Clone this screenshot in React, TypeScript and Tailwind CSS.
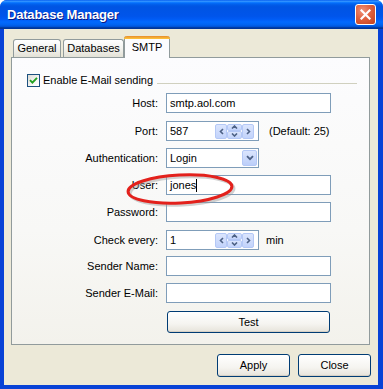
import React from "react";

function Spinner() {
  return (
    <div className="flex h-[15px] w-[39px] mr-[4px]">
      <div className="w-[12px] h-full rounded-[2px] border border-[#b4c8f6] bg-[linear-gradient(180deg,#dbe5fd_0%,#c2d3fb_100%)] flex items-center justify-center">
        <svg width="5" height="7" viewBox="0 0 5 7"><path d="M4 1 L1.5 3.5 L4 6" stroke="#4d6185" strokeWidth="1.6" fill="none" /></svg>
      </div>
      <div className="w-[15px] h-full flex flex-col">
        <div className="flex-1 rounded-[2px] border border-[#b4c8f6] bg-[linear-gradient(180deg,#dbe5fd_0%,#c2d3fb_100%)] flex items-center justify-center">
          <svg width="7" height="4" viewBox="0 0 7 4"><path d="M1 3.5 L3.5 1 L6 3.5" stroke="#4d6185" strokeWidth="1.6" fill="none" /></svg>
        </div>
        <div className="flex-1 rounded-[2px] border border-[#b4c8f6] bg-[linear-gradient(180deg,#dbe5fd_0%,#c2d3fb_100%)] flex items-center justify-center">
          <svg width="7" height="4" viewBox="0 0 7 4"><path d="M1 0.5 L3.5 3 L6 0.5" stroke="#4d6185" strokeWidth="1.6" fill="none" /></svg>
        </div>
      </div>
      <div className="w-[12px] h-full rounded-[2px] border border-[#b4c8f6] bg-[linear-gradient(180deg,#dbe5fd_0%,#c2d3fb_100%)] flex items-center justify-center">
        <svg width="5" height="7" viewBox="0 0 5 7"><path d="M1 1 L3.5 3.5 L1 6" stroke="#4d6185" strokeWidth="1.6" fill="none" /></svg>
      </div>
    </div>
  );
}

function Row({ label, mt, children }: { label: string; mt: string; children: React.ReactNode }) {
  return (
    <div className={`flex items-center h-[20px] ${mt}`}>
      <div className="w-[146px] text-right whitespace-nowrap">{label}</div>
      <div className="ml-[8px] flex items-center">{children}</div>
    </div>
  );
}

function TextBox({ value, caret }: { value?: string; caret?: boolean }) {
  return (
    <div className="w-[165px] h-[20px] border border-[#7f9db9] bg-white pl-[3px] flex items-center">
      <span>{value}</span>
      {caret && <span className="inline-block w-px h-[13px] bg-black" />}
    </div>
  );
}

function XPButton({ label, w, h }: { label: string; w: string; h: string }) {
  return (
    <div
      className={`${w} ${h} rounded-[3px] border border-[#003c74] bg-[linear-gradient(180deg,#ffffff_0%,#f5f4f0_60%,#e6e3da_100%)] flex items-center justify-center shadow-[inset_0_-1px_0_#d6d0c5]`}
    >
      {label}
    </div>
  );
}

export default function App() {
  return (
    <div className="w-[383px] h-[389px] bg-white font-['Liberation_Sans',Arial,sans-serif] text-[11px] text-black">
      <div className="w-full h-full flex flex-col rounded-t-[7px] overflow-hidden bg-[#0842d6]">
        <div className="h-[29px] shrink-0 flex items-center pl-[7px] pr-[7px] bg-[linear-gradient(180deg,#0058ee_0%,#3593ff_4%,#288eff_6%,#127dff_8%,#036ffc_10%,#0262ee_14%,#0057e5_20%,#0054e3_24%,#0055eb_56%,#005bf5_66%,#026afe_76%,#0062ef_86%,#0052d6_92%,#0040ab_94%,#003092_100%)]">
          <div className="flex-1 text-white font-bold text-[13px] [text-shadow:1px_1px_0_#0a1883] tracking-[-0.2px]">
            Database Manager
          </div>
          <div className="w-[21px] h-[21px] rounded-[3px] border border-white bg-[radial-gradient(circle_at_35%_30%,#f0927a_0%,#e0613f_45%,#c2401c_100%)] flex items-center justify-center">
            <svg width="11" height="11" viewBox="0 0 11 11">
              <path d="M1.5 1.5 L9.5 9.5 M9.5 1.5 L1.5 9.5" stroke="white" strokeWidth="2.2" strokeLinecap="square" />
            </svg>
          </div>
        </div>

        <div className="flex-1 ml-[4px] mr-[5px] mb-[4px] bg-[#ece9d8] flex flex-col">
          <div className="pt-[7px] pl-[9px] h-[28px] flex items-end">
            <div className="w-[48px] h-[18px] border border-b-0 border-[#919b9c] rounded-t-[3px] bg-[linear-gradient(180deg,#ffffff_0%,#f3f3ef_50%,#e3e1d6_100%)] flex items-center justify-center">
              General
            </div>
            <div className="ml-[2px] w-[61px] h-[18px] border border-b-0 border-[#919b9c] rounded-t-[3px] bg-[linear-gradient(180deg,#ffffff_0%,#f3f3ef_50%,#e3e1d6_100%)] flex items-center justify-center">
              Databases
            </div>
            <div className="relative z-10 -mb-px w-[46px] h-[22px] border-x border-[#919b9c] rounded-t-[3px] bg-[#fcfcfe] flex flex-col">
              <div className="h-[3px] -mx-px rounded-t-[3px] bg-[linear-gradient(180deg,#e68b2c_0%,#ffc73c_100%)]" />
              <div className="flex-1 flex items-center justify-center pb-[2px]">SMTP</div>
            </div>
          </div>

          <div className="ml-[7px] w-[359px] h-[288px] border border-[#919b9c] bg-[linear-gradient(180deg,#fcfcfe_0%,#f8f8f6_60%,#f3f2ec_100%)] pt-[16px]">
            <div className="flex items-center h-[13px] pl-[15px] pr-[12px]">
              <div className="w-[13px] h-[13px] border border-[#1c5180] bg-[linear-gradient(135deg,#dcdbd5_0%,#f6f6f4_60%,#ffffff_100%)] flex items-center justify-center">
                <svg width="9" height="9" viewBox="0 0 9 9">
                  <path d="M1 4.2 L3.4 6.6 L8 1.8" stroke="#21a121" strokeWidth="1.9" fill="none" />
                </svg>
              </div>
              <span className="ml-[3px] whitespace-nowrap">Enable E-Mail sending</span>
              <div className="flex-1 ml-[4px] h-px bg-[#d0d0bf] translate-y-[3px]" />
            </div>

            <Row label="Host:" mt="mt-[6px]">
              <TextBox value="smtp.aol.com" />
            </Row>
            <Row label="Port:" mt="mt-[8px]">
              <div className="w-[93px] h-[20px] border border-[#7f9db9] bg-white pl-[3px] flex items-center justify-between">
                <span>587</span>
                <Spinner />
              </div>
              <span className="ml-[10px]">(Default: 25)</span>
            </Row>
            <Row label="Authentication:" mt="mt-[7px]">
              <div className="w-[93px] h-[20px] border border-[#7f9db9] bg-white pl-[3px] flex items-center justify-between">
                <span>Login</span>
                <div className="w-[15px] h-[16px] mr-px rounded-[2px] border border-[#b4c8f6] bg-[linear-gradient(180deg,#dbe5fd_0%,#bccef9_100%)] flex items-center justify-center">
                  <svg width="8" height="6" viewBox="0 0 8 6">
                    <path d="M1 1.2 L4 4.2 L7 1.2" stroke="#4d6185" strokeWidth="1.8" fill="none" />
                  </svg>
                </div>
              </div>
            </Row>
            <div className="relative">
              <Row label="User:" mt="mt-[7px]">
                <TextBox value="jones" caret />
              </Row>
              <svg className="absolute left-[113px] top-[-6px] pointer-events-none" width="112" height="40" viewBox="0 0 112 40">
                <ellipse cx="57" cy="22" rx="52" ry="14" transform="rotate(-3 57 22)" fill="none" stroke="#9a9a9a" strokeOpacity="0.45" strokeWidth="3" />
                <ellipse cx="55" cy="20" rx="52" ry="14" transform="rotate(-3 55 20)" fill="none" stroke="#e3211c" strokeWidth="3" />
              </svg>
            </div>
            <Row label="Password:" mt="mt-[7px]">
              <TextBox />
            </Row>
            <Row label="Check every:" mt="mt-[8px]">
              <div className="w-[93px] h-[20px] border border-[#7f9db9] bg-white pl-[3px] flex items-center justify-between">
                <span>1</span>
                <Spinner />
              </div>
              <span className="ml-[7px]">min</span>
            </Row>
            <Row label="Sender Name:" mt="mt-[6px]">
              <TextBox />
            </Row>
            <Row label="Sender E-Mail:" mt="mt-[7px]">
              <TextBox />
            </Row>
            <div className="mt-[8px] ml-[155px]">
              <XPButton label="Test" w="w-[163px]" h="h-[22px]" />
            </div>
          </div>

          <div className="mt-[9px] ml-[213px] flex gap-[8px]">
            <XPButton label="Apply" w="w-[73px]" h="h-[23px]" />
            <XPButton label="Close" w="w-[73px]" h="h-[23px]" />
          </div>
        </div>
      </div>
    </div>
  );
}
